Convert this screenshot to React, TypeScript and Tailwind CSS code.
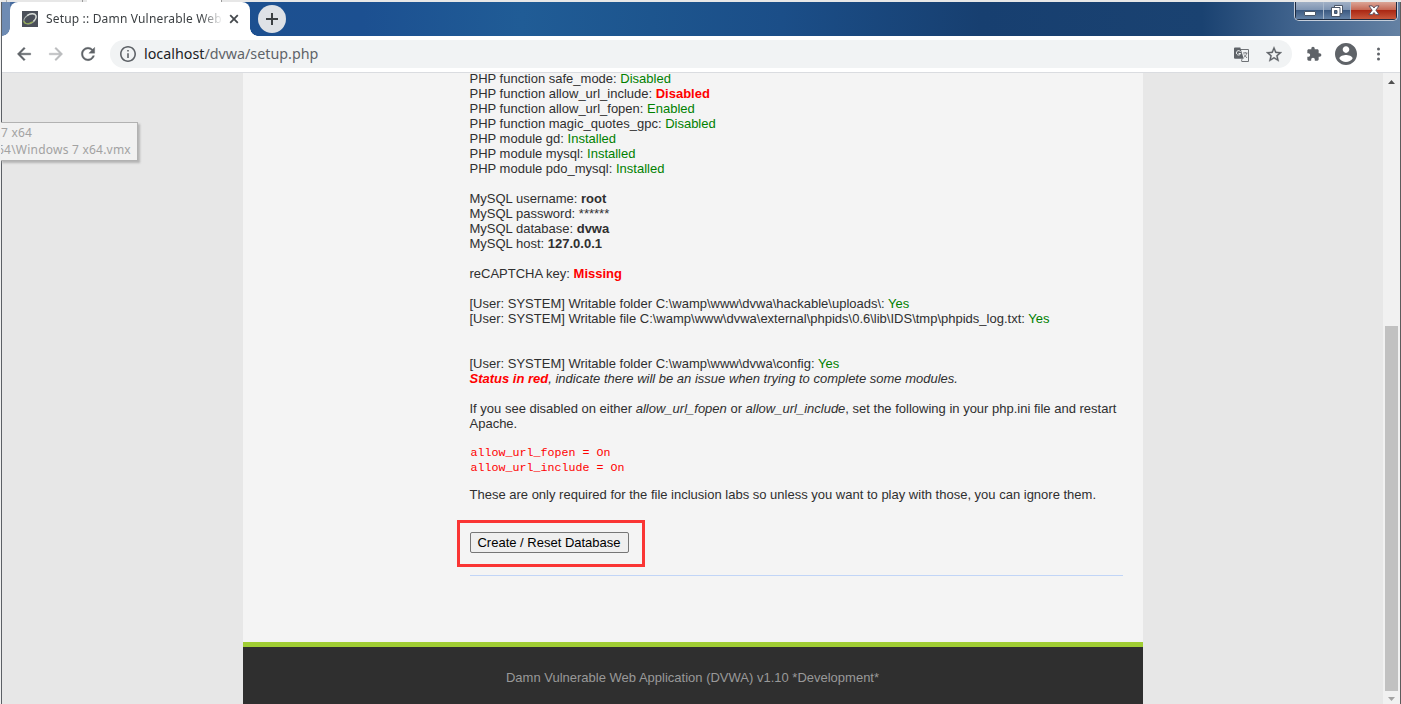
import type { ReactNode } from 'react';

type CheckProps = {
  label: string;
  value: string;
  bad?: boolean;
};

const phpChecks: CheckProps[] = [
  { label: 'PHP function safe_mode', value: 'Disabled' },
  { label: 'PHP function allow_url_include', value: 'Disabled', bad: true },
  { label: 'PHP function allow_url_fopen', value: 'Enabled' },
  { label: 'PHP function magic_quotes_gpc', value: 'Disabled' },
  { label: 'PHP module gd', value: 'Installed' },
  { label: 'PHP module mysql', value: 'Installed' },
  { label: 'PHP module pdo_mysql', value: 'Installed' }
];

const mysqlSettings = [
  { label: 'MySQL username', value: 'root' },
  { label: 'MySQL password', value: '******', plain: true },
  { label: 'MySQL database', value: 'dvwa' },
  { label: 'MySQL host', value: '127.0.0.1' }
];

function Check({ label, value, bad }: CheckProps) {
  return (
    <div>
      {label}: <span className={bad ? 'font-bold text-[#ff0000]' : 'text-[#008000]'}>{value}</span>
    </div>
  );
}

function Block({ children }: { children: ReactNode }) {
  return <div className="mb-[15px]">{children}</div>;
}

function WindowButtons() {
  return (
    <div className="mr-[2px] flex h-[19px] w-[104px] overflow-hidden rounded-b-[5px] border border-t-0 border-[#c5cedb] bg-[#1c2a40] p-px pt-0">
      <div className="flex w-[28px] items-center justify-center border-r border-[#a9b8cb] bg-[linear-gradient(180deg,#a0b0c6_0%,#7f95b3_45%,#3c5a82_50%,#6482a6_100%)]">
        <svg width="12" height="5" viewBox="0 0 12 5" className="mt-[5px]">
          <rect x="0.5" y="0.5" width="11" height="4" rx="0.5" fill="#fff" stroke="#4b5769" />
        </svg>
      </div>
      <div className="flex w-[27px] items-center justify-center border-r border-[#a9b8cb] bg-[linear-gradient(180deg,#a0b0c6_0%,#7f95b3_45%,#3c5a82_50%,#6482a6_100%)]">
        <svg width="12" height="12" viewBox="0 0 12 12">
          <path d="M3.5.5h8v8h-8z" fill="#fff" stroke="#4b5769" />
          <path d="M.5 2.5h8.500v9H.5z" fill="#fff" stroke="#4b5769" />
          <path d="M3.500 5.500h2.500v3H3.500z" fill="#4b6a93" stroke="#4b5769" />
        </svg>
      </div>
      <div className="flex flex-1 items-center justify-center bg-[linear-gradient(180deg,#dba596_0%,#c66a56_45%,#ab2814_50%,#c8583c_100%)]">
        <svg width="12" height="11" viewBox="0 0 13 12">
          <path d="M1 1h3.6l1.9 2.3L8.4 1H12L8.5 5.7 12 10.5H8.400L6.500 8.200l-1.900 2.300H1l3.500-4.800z" fill="#fff" stroke="#53495a" />
        </svg>
      </div>
    </div>
  );
}

function TabStrip() {
  return (
    <div className="flex h-[34px] bg-[linear-gradient(90deg,#6e8bb3_0px,#1c4a88_20px,#1d5090_260px,#1c5091_360px,#205c96_520px,#1d558e_650px,#1b4e88_780px,#173f70_980px,#1a4271_1200px,#3f628c_1290px,#6481a3_1398px)]">
      <div className="w-2 bg-[#6e8bb3]" />
      <div className="relative flex h-[34px] w-[240px] items-center rounded-t-[8px] bg-white pl-3">
        <div className="absolute bottom-0 -left-2 size-2 bg-[radial-gradient(circle_at_0_0,transparent_7.5px,white_8px)]" />
        <div className="absolute -right-2 bottom-0 size-2 bg-[radial-gradient(circle_at_100%_0,transparent_7.5px,white_8px)]" />
        <svg width="16" height="16" viewBox="0 0 16 16" className="shrink-0">
          <rect width="16" height="16" fill="#4b5059" />
          <ellipse cx="8" cy="8" rx="6.6" ry="4.3" transform="rotate(-28 8 8)" fill="none" stroke="#a9b0ac" strokeWidth="1" />
          <path d="M5 4.400C8.500 2 13 2 14 4.500c.6 1.800-.8 4-2.600 5.700" fill="none" stroke="#dfe3df" strokeWidth="1.200" />
          <path d="M1.800 10c.4 3.400 5.400 3.600 9 .8" fill="none" stroke="#93ab52" strokeWidth="1.200" />
        </svg>
        <div className="ml-2 w-[175px] overflow-hidden font-['Noto_Sans','Open_Sans',sans-serif] text-[12px] leading-[20px] tracking-[0.17px] whitespace-nowrap text-[#3c4043] mask-[linear-gradient(90deg,black_155px,transparent_177px)]">
          Setup :: Damn Vulnerable Web
        </div>
        <svg width="10" height="10" viewBox="0 0 10 10" className="ml-2">
          <path d="M1.200 1.200l7.600 7.600M8.800 1.200L1.200 8.800" stroke="#45494d" strokeWidth="1.800" />
        </svg>
      </div>
      <div className="mt-[3px] ml-2 flex size-7 items-center justify-center rounded-full bg-[#dee1e6]">
        <svg width="12" height="12" viewBox="0 0 12 12">
          <path d="M6 0v12M0 6h12" stroke="#3c4043" strokeWidth="2" />
        </svg>
      </div>
      <div className="flex-1" />
      <WindowButtons />
    </div>
  );
}

function Toolbar() {
  return (
    <div className="flex h-[37px] items-center border-b border-[#dadce0] bg-white pl-3">
      <svg width="20" height="20" viewBox="0 0 24 24" fill="#5f6368" stroke="#5f6368" strokeWidth=".5">
        <path d="M20 11H7.830l5.590-5.590L12 4l-8 8 8 8 1.410-1.410L7.830 13H20v-2z" />
      </svg>
      <svg width="20" height="20" viewBox="0 0 24 24" fill="#babcbe" stroke="#babcbe" strokeWidth=".5" className="ml-3">
        <path d="M12 4l-1.410 1.410L16.170 11H4v2h12.170l-5.580 5.590L12 20l8-8z" />
      </svg>
      <svg width="20" height="20" viewBox="0 0 24 24" fill="#5f6368" stroke="#5f6368" strokeWidth=".4" className="ml-3">
        <path d="M17.650 6.350C16.200 4.900 14.210 4 12 4c-4.420 0-7.990 3.580-7.990 8s3.570 8 7.990 8c3.730 0 6.840-2.550 7.730-6h-2.080c-.82 2.330-3.040 4-5.650 4-3.310 0-6-2.690-6-6s2.690-6 6-6c1.660 0 3.140.69 4.220 1.780L13 11h7V4l-2.350 2.350z" />
      </svg>
      <div className="ml-[12px] flex h-7 w-[1182px] items-center rounded-full bg-[#f1f3f4] pl-[10px]">
        <svg width="16" height="16" viewBox="2 2 20 20" fill="#5f6368">
          <path d="M11 7h2v2h-2zm0 4h2v6h-2zm1-9C6.480 2 2 6.480 2 12s4.480 10 10 10 10-4.480 10-10S17.520 2 12 2zm0 18c-4.410 0-8-3.590-8-8s3.590-8 8-8 8 3.590 8 8-3.590 8-8 8z" />
        </svg>
        <div className="ml-2 flex-1 font-['Noto_Sans','Open_Sans',sans-serif] text-[14.300px] leading-[20px] text-[#5f6368]">
          <span className="text-[#202124]">localhost</span>/dvwa/setup.php
        </div>
        <svg width="15" height="15" viewBox="0 0 15 15" className="mr-[17px]">
          <path d="M6 2.500h8.500v12H7.500" fill="#f1f3f4" stroke="#6f7276" />
          <path d="M1 .5h5.300L9.700 11.700H1a1 1 0 0 1-1-1V1.500a1 1 0 0 1 1-1z" fill="#5f6368" />
          <path d="M6.500 4.700a2.200 2.200 0 1 0 .2 1.800H4.600" fill="none" stroke="#f1f3f4" />
          <path d="M9 6h4.500M11.200 5v1M12.700 6c-.3 2-1.500 3.500-3 4.300M10 7.500l3 3.500M8 12l-.5 2" fill="none" stroke="#6f7276" strokeWidth=".9" />
        </svg>
        <svg width="16" height="16" viewBox="2 1.500 20 20" fill="#5f6368" stroke="#5f6368" strokeWidth=".3" className="mr-[10px]">
          <path d="M22 9.240l-7.190-.62L12 2 9.190 8.630 2 9.240l5.460 4.730L5.820 21 12 17.270 18.180 21l-1.630-7.030L22 9.240zM12 15.400l-3.760 2.270 1-4.280-3.320-2.880 4.380-.38L12 6.100l1.710 4.040 4.380.38-3.320 2.880 1 4.280L12 15.400z" />
        </svg>
      </div>
      <svg width="16" height="16" viewBox="0 0 24 24" fill="#5f6368" className="ml-[14px]">
        <path d="M20.500 11H19V7c0-1.100-.9-2-2-2h-4V3.500C13 2.120 11.880 1 10.500 1S8 2.120 8 3.500V5H4c-1.100 0-1.990.9-1.990 2v3.800H3.500c1.490 0 2.700 1.210 2.700 2.700s-1.210 2.700-2.700 2.700H2V20c0 1.100.9 2 2 2h3.800v-1.500c0-1.490 1.210-2.700 2.700-2.700 1.490 0 2.700 1.210 2.700 2.700V22H17c1.100 0 2-.9 2-2v-4h1.500c1.380 0 2.500-1.120 2.500-2.500S21.880 11 20.500 11z" />
      </svg>
      <svg width="22" height="22" viewBox="2 2 20 20" fill="#5f6368" className="ml-[13px]">
        <path d="M12 2C6.480 2 2 6.480 2 12s4.480 10 10 10 10-4.480 10-10S17.520 2 12 2zm0 3c1.660 0 3 1.340 3 3s-1.340 3-3 3-3-1.340-3-3 1.340-3 3-3zm0 14.200c-2.500 0-4.710-1.280-6-3.220.03-1.990 4-3.080 6-3.080 1.990 0 5.970 1.090 6 3.080-1.290 1.940-3.500 3.220-6 3.220z" />
      </svg>
      <svg width="4" height="14" viewBox="0 0 4 14" fill="#5f6368" className="ml-[19px]">
        <circle cx="2.500" cy="2" r="1.500" />
        <circle cx="2.500" cy="7" r="1.500" />
        <circle cx="2.500" cy="12" r="1.500" />
      </svg>
    </div>
  );
}

function SetupContent() {
  return (
    <div className="-mt-[2px] pl-[227px] text-[13px] leading-[15px] text-[#2f2f2f]">
      <Block>
        {phpChecks.map(c => (
          <Check key={c.label} {...c} />
        ))}
      </Block>
      <Block>
        {mysqlSettings.map(s => (
          <div key={s.label}>
            {s.label}: <span className={s.plain ? '' : 'font-bold'}>{s.value}</span>
          </div>
        ))}
      </Block>
      <Block>
        <Check label="reCAPTCHA key" value="Missing" bad />
      </Block>
      <div className="mb-[30px]">
        <Check label="[User: SYSTEM] Writable folder C:\wamp\www\dvwa\hackable\uploads\" value="Yes" />
        <Check label="[User: SYSTEM] Writable file C:\wamp\www\dvwa\external\phpids\0.6\lib\IDS\tmp\phpids_log.txt" value="Yes" />
      </div>
      <Block>
        <Check label="[User: SYSTEM] Writable folder C:\wamp\www\dvwa\config" value="Yes" />
        <div className="italic">
          <span className="font-bold text-[#ff0000]">Status in red</span>, indicate there will be an issue when trying to complete some modules.
        </div>
      </Block>
      <div className="w-[653px]">
        If you see disabled on either <i>allow_url_fopen</i> or <i>allow_url_include</i>, set the following in your php.ini file and restart Apache.
      </div>
      <pre className="mt-[15px] pl-px font-['Liberation_Mono',monospace] text-[11.660px] leading-[15px] text-[#ff0000]">
        {'allow_url_fopen = On\nallow_url_include = On'}
      </pre>
      <p className="mt-[11px]">These are only required for the file inclusion labs so unless you want to play with those, you can ignore them.</p>
      <div className="mt-[18px] -ml-[13px] h-[47px] w-[188px] border-3 border-[#fa3534] pt-[9px] pl-[10px]">
        <button className="h-[21px] w-[159px] rounded-[2px] border border-[#767676] bg-[#efefef] text-[13px] leading-[15px] whitespace-nowrap text-black">
          Create / Reset Database
        </button>
      </div>
      <div className="mt-2 h-px w-[653px] bg-[#c1d5f7]" />
    </div>
  );
}

function Scrollbar() {
  return (
    <div className="flex w-[17px] flex-col items-center bg-[#f1f1f1]">
      <svg width="7" height="4" viewBox="0 0 7 4" className="mt-[7px]">
        <path d="M0 4L3.500 0 7 4z" fill="#505050" />
      </svg>
      <div className="mt-[242px] h-[365px] w-[13px] bg-[#c1c1c1]" />
      <svg width="7" height="4" viewBox="0 0 7 4" className="mt-[6px]">
        <path d="M0 0h7L3.500 4z" fill="#a3a3a3" />
      </svg>
    </div>
  );
}

export default function App() {
  return (
    <div className="relative h-[704px] w-[1401px] overflow-hidden border-l border-[#f0f0f0] bg-[#e7e7e7] font-['Liberation_Sans',Arial,sans-serif]">
      <div className="flex h-[2px] bg-[#e7e7e7]">
        <div className="ml-[5px] w-px bg-[#b0b0b0]" />
        <div className="ml-[75px] w-px bg-[#9a9a9a]" />
        <div className="ml-[4px] w-[134px] bg-white" />
        <div className="w-px bg-[#9a9a9a]" />
      </div>
      <div className="flex h-[702px] flex-col border-x border-r-[#5c5c5c] border-l-[#5c6066]">
        <TabStrip />
        <Toolbar />
        <div className="flex min-h-0 flex-1">
          <div className="flex min-w-0 flex-1 justify-center">
            <div className="flex w-[900px] flex-col overflow-hidden bg-[#f4f4f4]">
              <SetupContent />
              <div className="mt-auto h-[62px] shrink-0 border-t-5 border-[#a0cd33] bg-[#2f2f2f] pt-[23px] text-center text-[13px] leading-[15px] text-[#999999]">
                Damn Vulnerable Web Application (DVWA) v1.10 *Development*
              </div>
            </div>
          </div>
          <Scrollbar />
        </div>
      </div>
      {/* faded host tooltip over the left edge of the window */}
      <div className="absolute top-[122px] -left-px h-[39px] w-[138px] overflow-hidden border border-l-0 border-[#b2b2b2] bg-[#f1f1f1] pt-px font-['Noto_Sans','Open_Sans',sans-serif] text-[12px] leading-[17px] tracking-[0.22px] whitespace-nowrap text-[#a2a2a2] shadow-[2px_2px_2px_#b4b4b4]">
        <div className="pl-px">7 x64</div>
        <div className="-ml-[3px]">64\Windows 7 x64.vmx</div>
      </div>
    </div>
  );
}
